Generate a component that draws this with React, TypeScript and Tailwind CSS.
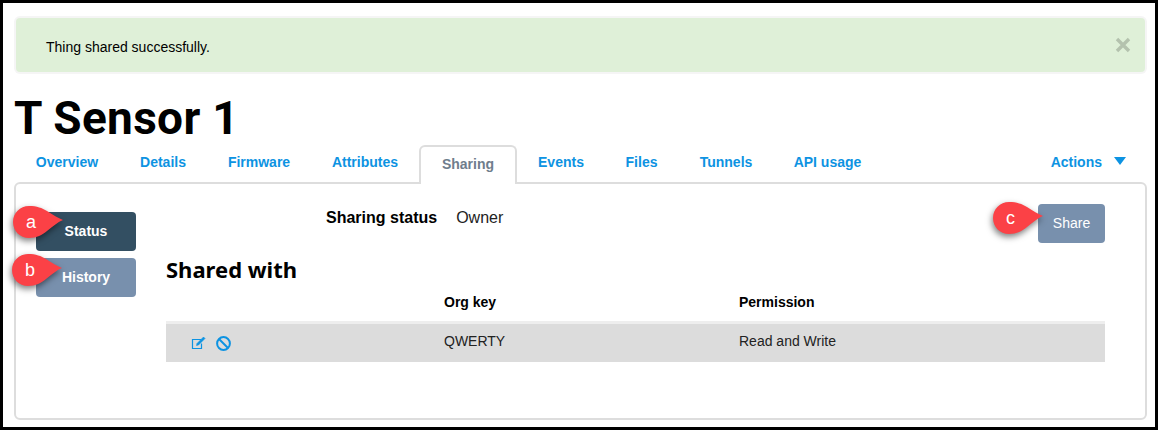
const sans = { fontFamily: '"Liberation Sans", Arial, sans-serif' }

const tabsLeft = [
  { label: 'Overview', width: 'w-[104px]' },
  { label: 'Details', width: 'w-[88px]' },
  { label: 'Firmware', width: 'w-[104px]' },
  { label: 'Attributes', width: 'w-[108px]' },
]

const tabsRight = [
  { label: 'Events', width: 'w-[88px]' },
  { label: 'Files', width: 'w-[73px]' },
  { label: 'Tunnels', width: 'w-[96px]' },
  { label: 'API usage', width: 'w-[107px]' },
]

function Callout({ letter, className }: { letter: string; className: string }) {
  return (
    <div className={`absolute h-[34px] w-[52px] ${className}`}>
      <svg width="52" height="34" viewBox="0 0 52 34" className="absolute left-0 top-0 overflow-visible drop-shadow-[-1px_3px_3px_rgba(0,0,0,0.5)]">
        <path d="M17 1 C25 1 30 3 35 6 C41 10 46 13 51 15 C46 17 41 21 35 26 C30 30 25 33 17 33 C8 33 1 26 1 17 C1 8 8 1 17 1 Z" fill="#fb4146" />
      </svg>
      <span className="absolute left-[14px] top-[7px] text-[18px] leading-[20px] text-white">{letter}</span>
    </div>
  )
}

export default function App() {
  return (
    <div className="relative h-[430px] w-[1158px] overflow-hidden border-[3px] border-black bg-white text-black" style={sans}>
      <div className="pl-[11px] pr-[8px] pt-[15px]">
        <div className="mx-[2px] flex h-[54px] items-center justify-between rounded-[4px] bg-[#dff0d8] pl-[30px] pr-[14px] shadow-[0_0_0_2px_#f5f5f5]">
          <span className="mt-[4px] text-[14px]">Thing shared successfully.</span>
          <span className="text-[#b4c2ae]">
            <svg width="16" height="16" viewBox="0 0 16 16" className="block">
              <path d="M2 2 L14 14 M14 2 L2 14" stroke="currentColor" strokeWidth="3.4" />
            </svg>
          </span>
        </div>

        <h1 className="mt-[19px] text-[46px] font-bold leading-[54px] tracking-[0.3px]" style={{ fontFamily: 'Roboto, sans-serif' }}>
          T Sensor 1
        </h1>

        <div className="relative z-10 -mb-[2px] -mt-[1px] flex h-[40px] items-end pl-[1px] pr-[21px] text-[14px] font-bold text-[#0d93e2]">
          {tabsLeft.map((tab) => (
            <a key={tab.label} className={`${tab.width} h-[36px] pt-[4px] text-center`}>
              {tab.label}
            </a>
          ))}
          <a className="h-[39px] w-[98px] rounded-t-[6px] border-2 border-b-0 border-[#dddddd] bg-white pt-[7px] text-center text-[#6f7d8c]">
            Sharing
          </a>
          {tabsRight.map((tab) => (
            <a key={tab.label} className={`${tab.width} h-[36px] pt-[4px] text-center`}>
              {tab.label}
            </a>
          ))}
          <a className="ml-auto flex h-[36px] items-start gap-[12px] pt-[4px]">
            Actions
            <svg width="12" height="8" viewBox="0 0 12 8" className="mt-[5px]">
              <path d="M0 0 H12 L6 8 Z" fill="currentColor" />
            </svg>
          </a>
        </div>

        <div className="flex h-[238px] rounded-[6px] border-2 border-[#dddddd] pl-[20px] pr-[40px] pt-[20px]">
          <div className="flex w-[130px] shrink-0 flex-col gap-[7px] pt-[8px]">
            <button className="h-[39px] w-[100px] rounded-[4px] bg-[#334f62] text-[14px] font-bold text-white">Status</button>
            <button className="h-[39px] w-[100px] rounded-[4px] bg-[#7890ad] text-[14px] font-bold text-white">History</button>
          </div>

          <div className="flex-1">
            <div className="flex h-[39px] items-start justify-between">
              <div className="flex pl-[160px] pt-[4px] text-[16px] leading-[20px]">
                <span className="font-bold">Sharing status</span>
                <span className="ml-[19px] text-[#222]">Owner</span>
              </div>
              <button className="h-[39px] w-[67px] rounded-[4px] bg-[#7890ad] text-[14px] text-white">Share</button>
            </div>

            <h2 className="mt-[12px] text-[22px] font-bold leading-[28px]" style={{ fontFamily: '"Noto Sans", sans-serif' }}>
              Shared with
            </h2>

            <div className="mt-[3px] flex h-[38px] items-center border-b-[3px] border-[#eeeeee] pb-[2px] text-[14px] font-bold">
              <span className="ml-[278px] w-[295px]">Org key</span>
              <span>Permission</span>
            </div>

            <div className="flex h-[38px] items-center bg-[#dcdcdc] text-[14px] text-[#222]">
              <div className="flex w-[278px] items-center gap-[10px] pl-[25px] text-[#0d93e2]">
                <svg width="15" height="14" viewBox="0 0 15 14" fill="none" stroke="currentColor" className="block">
                  <path d="M10 3.5 H1.5 V12.5 H10.5 V7.5" strokeWidth="1.2" />
                  <path d="M5.5 9.5 L6 7.5 L12.5 1 L14 2.5 L7.5 9 Z" fill="currentColor" strokeWidth="0.6" />
                </svg>
                <svg width="15" height="15" viewBox="0 0 15 15" fill="none" stroke="currentColor" strokeWidth="2" className="block">
                  <circle cx="7.5" cy="7.5" r="6.4" />
                  <path d="M3 3 L12 12" />
                </svg>
              </div>
              <span className="mb-[4px] w-[295px]">QWERTY</span>
              <span className="mb-[4px]">Read and Write</span>
            </div>
          </div>
        </div>
      </div>

      <Callout letter="a" className="left-[9px] top-[202px]" />
      <Callout letter="b" className="left-[8px] top-[250px]" />
      <Callout letter="c" className="left-[989px] top-[198px]" />
    </div>
  )
}
